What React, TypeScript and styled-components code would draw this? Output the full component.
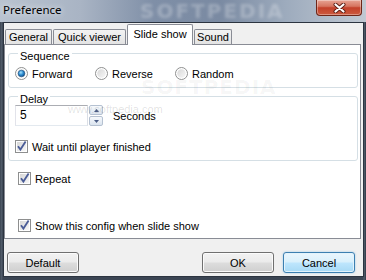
import React from 'react'
import styled, { createGlobalStyle, css } from 'styled-components'

const GlobalStyle = createGlobalStyle`
  html, body {
    margin: 0;
    padding: 0;
    background: #3d4756;
  }
  body {
    font-family: 'Liberation Sans', Arial, sans-serif;
    font-size: 11px;
    color: #000;
  }
  * {
    box-sizing: border-box;
  }
`

const Window = styled.div`
  position: relative;
  width: 366px;
  height: 280px;
  display: flex;
  flex-direction: column;
  overflow: hidden;
  background: #3d4756;
`

const TitleBar = styled.div`
  position: relative;
  flex: none;
  height: 22px;
  display: flex;
  align-items: flex-start;
  justify-content: space-between;
  overflow: hidden;
  background: linear-gradient(
    90deg,
    #b9c3d0 0%,
    #a9b4c4 22%,
    #7f8fa7 42%,
    #7a8aa2 60%,
    #9dabbd 78%,
    #c1c9d3 100%
  );
`

const Title = styled.span`
  position: relative;
  z-index: 1;
  padding-left: 3px;
  font-family: 'Noto Sans', 'Liberation Sans', sans-serif;
  font-size: 11.5px;
  line-height: 20px;
  color: #000;
  text-shadow: 0 0 6px rgba(255, 255, 255, 0.9);
`

const TitleMark = styled.span`
  position: absolute;
  left: 140px;
  top: 0;
  font-family: 'DejaVu Sans', sans-serif;
  font-weight: bold;
  font-size: 20px;
  line-height: 22px;
  letter-spacing: 2px;
  color: rgba(255, 255, 255, 0.26);
  filter: blur(1.4px);
`

const CloseButton = styled.div`
  position: relative;
  z-index: 1;
  width: 46px;
  height: 16px;
  margin-right: 4px;
  display: flex;
  align-items: center;
  justify-content: center;
  border: 1px solid #6e2618;
  border-top: none;
  border-radius: 0 0 4px 4px;
  background: linear-gradient(#e7a494 0%, #d67560 42%, #c3412a 52%, #cc5a3f 100%);
  box-shadow: inset 0 0 0 1px rgba(255, 255, 255, 0.35);
`

const Frame = styled.div`
  flex: 1;
  display: flex;
  padding: 0 2px 3px 3px;
  background: linear-gradient(90deg, #2e3744 0px, #56616f 1px, #3b4553 3px, #3b4553 363px, #56616f 364px, #2e3744 366px);
`

const Client = styled.div`
  flex: 1;
  display: flex;
  flex-direction: column;
  border: 1px solid #2c3440;
  background: #f0f0f0;
`

const TabStrip = styled.div`
  flex: none;
  height: 21px;
  display: flex;
  align-items: flex-end;
  padding-left: 1px;
`

const Tab = styled.div<{ $active?: boolean; $w: number }>`
  width: ${({ $w }) => $w}px;
  height: 15px;
  margin-right: 1px;
  border: 1px solid #898c95;
  border-bottom: none;
  border-radius: 2px 2px 0 0;
  text-align: center;
  line-height: 14px;
  white-space: nowrap;
  background: linear-gradient(#f3f3f3, #e3e3e3);
  ${({ $active }) =>
    $active &&
    css`
      position: relative;
      z-index: 1;
      height: 21px;
      margin-bottom: -1px;
      padding-top: 2px;
      background: #fff;
    `}
`

const Panel = styled.div`
  position: relative;
  flex: none;
  height: 195px;
  margin-right: 2px;
  padding: 1px 2px 0 3px;
  display: flex;
  flex-direction: column;
  border: 1px solid #898c95;
  background: #fff;
`

const PanelMark = styled.span`
  position: absolute;
  left: 136px;
  top: 30px;
  font-family: 'DejaVu Sans', sans-serif;
  font-weight: bold;
  font-size: 20px;
  letter-spacing: 1px;
  color: rgba(0, 0, 0, 0.045);
  pointer-events: none;
`

const SiteMark = styled.span`
  position: absolute;
  left: 63px;
  top: 58px;
  font-family: 'Liberation Sans', sans-serif;
  font-size: 11px;
  color: rgba(0, 0, 0, 0.12);
  pointer-events: none;
`

const Group = styled.fieldset<{ $gap?: number }>`
  margin: ${({ $gap }) => $gap ?? 0}px 0 0;
  padding: 0 0 7px 6px;
  min-width: 0;
  border: 1px solid #d5dfe5;
  border-radius: 3px;
`

const Legend = styled.legend`
  margin-left: 3px;
  padding: 0 2px;
  line-height: 14px;
  position: relative;
  top: 3px;
`

const RadioRow = styled.div`
  display: grid;
  grid-template-columns: repeat(3, 80px);
  margin-top: 7px;
`

const Item = styled.label<{ $top?: number; $left?: number }>`
  display: flex;
  align-items: center;
  gap: 4px;
  height: 13px;
  margin-top: ${({ $top }) => $top ?? 0}px;
  margin-left: ${({ $left }) => $left ?? 0}px;
  white-space: nowrap;
`

const SpinRow = styled.div`
  display: flex;
  align-items: center;
  height: 21px;
  margin-top: 2px;
`

const Edit = styled.div`
  width: 73px;
  height: 21px;
  padding-left: 4px;
  line-height: 19px;
  font-size: 12px;
  border: 1px solid;
  border-color: #abadb3 #dbdfe6 #e3e9ef #e2e3ea;
  background: #fff;
`

const Spin = styled.div`
  display: flex;
  flex-direction: column;
  gap: 1px;
  margin-left: 1px;
  width: 14px;
  height: 21px;
`

const SpinButton = styled.div`
  flex: 1;
  display: flex;
  align-items: center;
  justify-content: center;
  border: 1px solid #b5c1d1;
  border-radius: 2px;
  background: linear-gradient(#f6f9fc, #dbe4ef);
`

const Unit = styled.span`
  margin-left: 10px;
`

const Footer = styled.div`
  display: flex;
  gap: 9px;
  margin-top: 13px;
  padding: 0 8px 0 3px;
`

const Button = styled.div<{ $primary?: boolean; $push?: boolean }>`
  width: 72px;
  height: 21px;
  display: flex;
  align-items: center;
  justify-content: center;
  margin-left: ${({ $push }) => ($push ? 'auto' : '0')};
  border: 1px solid #707070;
  border-radius: 3px;
  background: linear-gradient(#f2f2f2 0%, #ebebeb 48%, #dddddd 52%, #cfcfcf 100%);
  box-shadow: inset 0 0 0 1px #fbfbfb;
  ${({ $primary }) =>
    $primary &&
    css`
      border-color: #3c7fb1;
      background: linear-gradient(#eaf6fd 0%, #d9f0fc 48%, #bee6fd 52%, #a7d9f5 100%);
      box-shadow: inset 0 0 0 1px #e2f3fc, 0 0 2px rgba(60, 160, 230, 0.5);
    `}
`

const CloseGlyph = () => (
  <svg width="13" height="10" viewBox="0 0 13 10">
    <path d="M2.5 1.5 L10.5 8.5 M10.5 1.5 L2.5 8.5" stroke="#5a1c12" strokeWidth="4" strokeLinecap="round" />
    <path d="M2.5 1.5 L10.5 8.5 M10.5 1.5 L2.5 8.5" stroke="#fff" strokeWidth="2.2" strokeLinecap="round" />
  </svg>
)

const Radio = ({ checked }: { checked?: boolean }) => (
  <svg width="13" height="13" viewBox="0 0 13 13">
    <defs>
      <linearGradient id="rf" x1="0" y1="0" x2="1" y2="1">
        <stop offset="0" stopColor="#d8d8d8" />
        <stop offset="1" stopColor="#f7f7f7" />
      </linearGradient>
      <radialGradient id="rd" cx="0.4" cy="0.35" r="0.7">
        <stop offset="0" stopColor="#a9e2fb" />
        <stop offset="0.5" stopColor="#2f8fd3" />
        <stop offset="1" stopColor="#0e4a86" />
      </radialGradient>
    </defs>
    <circle cx="6.5" cy="6.5" r="6" fill="#fff" stroke="#8e8f8f" />
    <circle cx="6.5" cy="6.5" r="4.3" fill="url(#rf)" />
    {checked && <circle cx="6.5" cy="6.5" r="3.3" fill="url(#rd)" stroke="#1b4f80" strokeWidth="0.6" />}
  </svg>
)

const Check = () => (
  <svg width="13" height="13" viewBox="0 0 13 13">
    <defs>
      <linearGradient id="cf" x1="0" y1="0" x2="1" y2="1">
        <stop offset="0" stopColor="#d6d6d6" />
        <stop offset="1" stopColor="#f8f8f8" />
      </linearGradient>
    </defs>
    <rect x="0.5" y="0.5" width="12" height="12" fill="#fff" stroke="#8e8f8f" />
    <rect x="2" y="2" width="9" height="9" fill="url(#cf)" />
    <path d="M3 6.3 L5.4 9.6 L10.6 1.6" fill="none" stroke="#4a5c97" strokeWidth="1.8" />
  </svg>
)

const Arrow = ({ up }: { up?: boolean }) => (
  <svg width="5" height="3" viewBox="0 0 5 3">
    <path d={up ? 'M0 3 L2.5 0 L5 3 Z' : 'M0 0 L5 0 L2.5 3 Z'} fill="#4b5d86" />
  </svg>
)

const tabs = [
  { label: 'General', w: 47 },
  { label: 'Quick viewer', w: 73 },
  { label: 'Slide show', w: 66, active: true },
  { label: 'Sound', w: 38 },
]

const App = () => {
  return (
    <Window>
      <GlobalStyle />
      <TitleBar>
        <TitleMark>SOFTPEDIA</TitleMark>
        <Title>Preference</Title>
        <CloseButton>
          <CloseGlyph />
        </CloseButton>
      </TitleBar>
      <Frame>
        <Client>
          <TabStrip>
            {tabs.map((t) => (
              <Tab key={t.label} $w={t.w} $active={t.active}>
                {t.label}
              </Tab>
            ))}
          </TabStrip>
          <Panel>
            <Group>
              <Legend>Sequence</Legend>
              <RadioRow>
                <Item>
                  <Radio checked />
                  Forward
                </Item>
                <Item>
                  <Radio />
                  Reverse
                </Item>
                <Item>
                  <Radio />
                  Random
                </Item>
              </RadioRow>
            </Group>
            <Group $gap={1}>
              <Legend>Delay</Legend>
              <SpinRow>
                <Edit>5</Edit>
                <Spin>
                  <SpinButton>
                    <Arrow up />
                  </SpinButton>
                  <SpinButton>
                    <Arrow />
                  </SpinButton>
                </Spin>
                <Unit>Seconds</Unit>
              </SpinRow>
              <Item $top={14}>
                <Check />
                Wait until player finished
              </Item>
            </Group>
            <Item $top={11} $left={10}>
              <Check />
              Repeat
            </Item>
            <Item $top={34} $left={10}>
              <Check />
              Show this config when slide show
            </Item>
            <PanelMark>SOFTPEDIA</PanelMark>
            <SiteMark>www.softpedia.com</SiteMark>
          </Panel>
          <Footer>
            <Button>Default</Button>
            <Button $push>OK</Button>
            <Button $primary>Cancel</Button>
          </Footer>
        </Client>
      </Frame>
    </Window>
  )
}

export default App
